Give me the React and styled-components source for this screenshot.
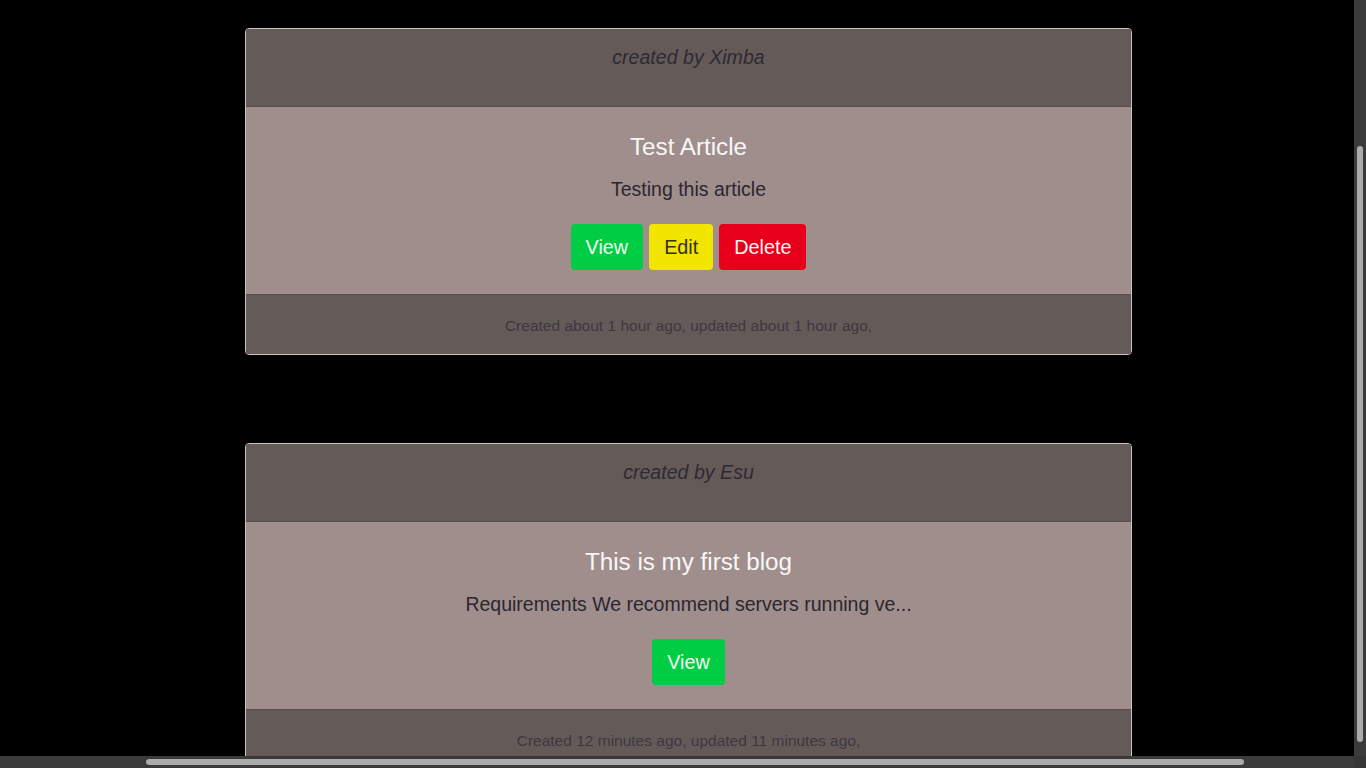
import React, { useLayoutEffect, useRef, useState } from 'react';
import styled, { createGlobalStyle } from 'styled-components';

const GlobalStyle = createGlobalStyle`
    html, body {
        margin: 0;
        padding: 0;
        background: #000;
        overflow: hidden;
        font-family: "Liberation Sans", Arial, sans-serif;
    }
`;

const articles = [
    {
        id: 1,
        author: 'Ximba',
        title: 'Test Article',
        excerpt: 'Testing this article',
        owner: true,
        created: 'about 1 hour ago',
        updated: 'about 1 hour ago',
    },
    {
        id: 2,
        author: 'Esu',
        title: 'This is my first blog',
        excerpt: 'Requirements We recommend servers running ve...',
        owner: false,
        created: '12 minutes ago',
        updated: '11 minutes ago',
    },
];

const App = () => {
    const area = useRef(null);
    const [bars, setBars] = useState(null);

    // page was photographed scrolled down and to the right
    useLayoutEffect(() => {
        const el = area.current;
        if (!el) return;
        el.scrollTop = 185;
        el.scrollLeft = 180;
        setBars({
            top: el.scrollTop / el.scrollHeight,
            height: el.clientHeight / el.scrollHeight,
            left: el.scrollLeft / el.scrollWidth,
            width: el.clientWidth / el.scrollWidth,
        });
    }, []);

    return (
        <>
            <GlobalStyle />
            <Frame>
                <ScrollArea ref={area}>
                    <Page>
                        <ArticleList>
                            {articles.map(article => (
                                <ArticleCard key={article.id} article={article} />
                            ))}
                        </ArticleList>
                    </Page>
                </ScrollArea>
                <Track vertical>
                    {bars && (
                        <Thumb
                            vertical
                            style={{ top: `${bars.top * 100}%`, height: `calc(${bars.height * 100}% - 3px)` }}
                        />
                    )}
                </Track>
                <Track>
                    {bars && (
                        <Thumb style={{ left: `${bars.left * 100}%`, width: `${bars.width * 100}%` }} />
                    )}
                </Track>
                <Corner />
            </Frame>
        </>
    );
};

const ArticleCard = ({ article }) => (
    <Card>
        <CardHeader>created by {article.author}</CardHeader>
        <CardBody>
            <Title>{article.title}</Title>
            <Excerpt>{article.excerpt}</Excerpt>
            <Actions>
                <Button variant="view">View</Button>
                {article.owner && <Button variant="edit">Edit</Button>}
                {article.owner && <Button variant="delete">Delete</Button>}
            </Actions>
        </CardBody>
        <CardFooter>
            Created {article.created}, updated {article.updated},
        </CardFooter>
    </Card>
);

const Frame = styled.div`
    display: grid;
    grid-template-columns: 1fr 12px;
    grid-template-rows: 1fr 12px;
    width: 100vw;
    height: 100vh;
`;

const ScrollArea = styled.div`
    overflow: hidden;
    background: #000;
    min-width: 0;
    min-height: 0;
`;

const Track = styled.div`
    position: relative;
    background: #3b3b3b;
`;

const Thumb = styled.div`
    position: absolute;
    background: #ababab;
    border-radius: 3px;
    ${p => p.vertical ? 'left: 3px; width: 6px;' : 'top: 3px; height: 6px;'}
`;

const Corner = styled.div`
    background: #363636;
`;

const Page = styled.div`
    width: 1670px;
    padding: 213px 0 0 425px;
    box-sizing: border-box;
`;

const ArticleList = styled.div`
    display: flex;
    flex-direction: column;
    gap: 88px;
    width: 887px;
`;

const Card = styled.article`
    border: 1px solid #c9c4c4;
    border-radius: 4px;
    overflow: hidden;
    text-align: center;
`;

const CardHeader = styled.div`
    height: 78px;
    box-sizing: border-box;
    padding-top: 17px;
    background: #645b59;
    border-bottom: 1px solid #564f4d;
    font-size: 19.6px;
    line-height: 22px;
    font-style: italic;
    color: #2e2a32;
`;

const CardBody = styled.div`
    height: 187px;
    box-sizing: border-box;
    background: #a08e8d;
    padding: 26px 20px 0;
    display: flex;
    flex-direction: column;
    align-items: center;
`;

const Title = styled.h2`
    margin: 0;
    font-size: 24.2px;
    line-height: 28px;
    font-weight: normal;
    color: #f9f7f7;
`;

const Excerpt = styled.p`
    margin: 17px 0 0;
    font-size: 19.5px;
    line-height: 22px;
    color: #2b2630;
`;

const buttonColors = {
    view: { bg: '#00cc44', fg: '#f2fff4' },
    edit: { bg: '#f2e500', fg: '#33301a' },
    delete: { bg: '#e8001a', fg: '#fff0f2' },
};

const Actions = styled.div`
    display: flex;
    gap: 6px;
    margin-top: 24px;
`;

const Button = styled.button`
    height: 46px;
    padding: 0 15px;
    border: none;
    border-radius: 4px;
    font-family: inherit;
    font-size: 19.8px;
    background: ${p => buttonColors[p.variant].bg};
    color: ${p => buttonColors[p.variant].fg};
    cursor: pointer;
`;

const CardFooter = styled.div`
    height: 60px;
    box-sizing: border-box;
    padding-top: 22px;
    background: #645b59;
    border-top: 1px solid #564f4d;
    font-size: 15.5px;
    line-height: 18px;
    color: #3d383f;
`;

export default App;
